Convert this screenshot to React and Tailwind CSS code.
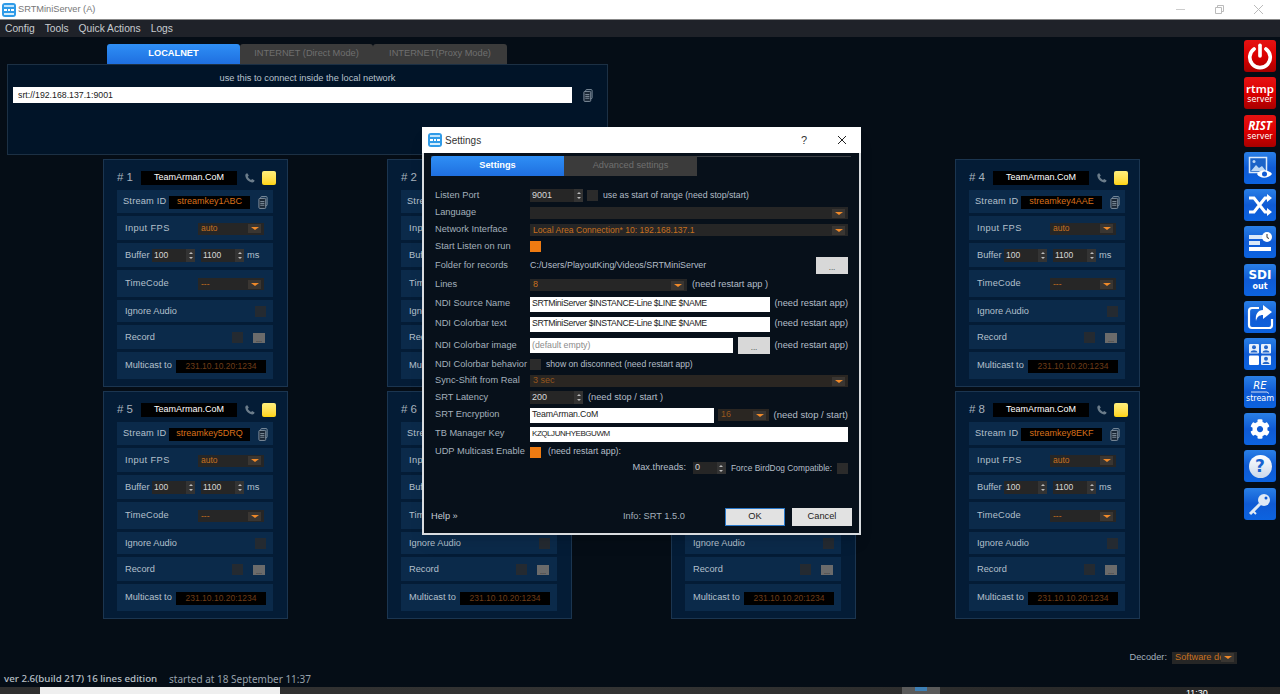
import React from "react";
import { FaCog } from "react-icons/fa";

const cards = [
  { n: 1, key: "streamkey1ABC" },
  { n: 2, key: "streamkey2ABC" },
  { n: 3, key: "streamkey3ABC" },
  { n: 4, key: "streamkey4AAE" },
  { n: 5, key: "streamkey5DRQ" },
  { n: 6, key: "streamkey6ABC" },
  { n: 7, key: "streamkey7ABC" },
  { n: 8, key: "streamkey8EKF" },
];

const AppIcon = () => (
  <svg width="14" height="14" viewBox="0 0 14 14" className="shrink-0">
    <rect width="14" height="14" rx="3" fill="#2f9be8" />
    <rect x="2" y="2" width="10" height="2" fill="#bfe3fb" />
    <rect x="2" y="6" width="3" height="2" fill="#fff" />
    <rect x="6" y="6" width="2" height="2" fill="#fff" />
    <rect x="9" y="6" width="3" height="2" fill="#fff" />
    <rect x="2" y="10" width="10" height="2" fill="#d6eefc" />
  </svg>
);

const CopyIcon = () => (
  <svg width="10" height="13" viewBox="0 0 11 14" fill="none" stroke="#8a98a6" strokeWidth="1" className="shrink-0">
    <rect x="3" y="0.5" width="7" height="10" rx="1" />
    <rect x="1" y="2.5" width="7.5" height="11" rx="1" fill="#1a2735" />
    <path d="M2.5 6h4.5M2.5 8h4.5M2.5 10h4.5" />
  </svg>
);

const Caret = () => (
  <span className="flex h-[9px] w-[13px] shrink-0 items-center justify-center bg-[#3a3632]">
    <span className="h-0 w-0 border-x-[4px] border-t-[3px] border-x-transparent border-t-[#f08a2a]" />
  </span>
);

const Select = ({ value, dim, className = "" }) => (
  <div
    className={`flex items-center justify-between pl-[3px] pr-[3px] ${
      dim ? "bg-[#2a2622] text-[#96561e]" : "bg-[#262626] text-[#c8701e]"
    } ${className}`}
  >
    <span className="overflow-hidden whitespace-nowrap">{value}</span>
    <Caret />
  </div>
);

const Spin = ({ value, className = "" }) => (
  <div className={`flex items-center justify-between bg-[#262626] pl-[2px] text-[#d8d8d8] ${className}`}>
    <span>{value}</span>
    <span className="flex h-full w-[9px] flex-col items-center justify-center gap-[3px] bg-[#333]">
      <span className="h-0 w-0 border-x-2 border-b-2 border-x-transparent border-b-[#bbb]" />
      <span className="h-0 w-0 border-x-2 border-t-2 border-x-transparent border-t-[#bbb]" />
    </span>
  </div>
);

const Box = ({ on, className = "" }) => (
  <span className={`block h-[11px] w-[11px] shrink-0 ${on ? "bg-[#ee7b12]" : "bg-[#2b2b2b]"} ${className}`} />
);

const Row = ({ className = "", children }) => (
  <div className={`flex items-center whitespace-nowrap bg-[#0b2a4a] pt-[1px] text-[9.25px] text-[#b4c0cc] ${className}`}>{children}</div>
);

const Card = ({ n, streamKey }) => (
  <div className="flex h-[228px] w-[185px] flex-col border border-[#1b3550] bg-[#041c36] pl-[13px] pr-[14px] pt-[7px]">
    <div className="-mr-[3px] flex h-[21px] shrink-0 items-center text-[#a7b2bd]">
      <span className="w-[24px] shrink-0 pl-[-1px] text-[11.5px]"># {n}</span>
      <span className="flex h-[14px] w-[96px] shrink-0 items-center justify-center bg-black text-[9px] text-white">TeamArman.CoM</span>
      <svg width="12" height="12" viewBox="0 0 24 24" fill="#6b7c8a" className="ml-[7px] shrink-0">
        <path d="M6.6 2.5l3 4.7-2 2.5c1.2 2.7 3.6 5 6.4 6.3l2.4-2 4.9 3c-.6 2.7-2.8 4.3-5.3 3.9C8.5 19.6 3.3 13.7 2.6 7c-.2-2.2 1.5-4 4-4.500z" />
      </svg>
      <span className="ml-[6px] h-[14px] w-[14px] shrink-0 rounded-[2px] bg-gradient-to-b from-[#ffef7a] to-[#ffd400]" />
    </div>
    <Row className="mt-[2px] h-[23px] pl-[6px]">
      <span className="w-[46px] tracking-[0.2px]">Stream ID</span>
      <span className="flex h-[13px] w-[81px] items-center justify-center bg-black text-[9px] text-[#d9701a]">{streamKey}</span>
      <span className="ml-[8px]"><CopyIcon /></span>
    </Row>
    <Row className="mt-[3px] h-[24px] justify-between pl-[8px] pr-[9px]">
      <span className="tracking-[0.4px]">Input FPS</span>
      <Select value="auto" className="h-[12px] w-[66px] text-[8.5px]" />
    </Row>
    <Row className="mt-[3px] h-[24px] pl-[8px]">
      <span className="w-[27px]">Buffer</span>
      <Spin value="100" className="h-[13px] w-[43px] text-[8.5px]" />
      <Spin value="1100" className="ml-[6px] h-[13px] w-[43px] text-[8.5px]" />
      <span className="ml-[3px]">ms</span>
    </Row>
    <Row className="mt-[3px] h-[27px] justify-between pl-[8px] pr-[9px]">
      <span className="tracking-[0.2px]">TimeCode</span>
      <Select value="---" className="h-[12px] w-[66px] text-[8.5px]" />
    </Row>
    <Row className="mt-[3px] h-[22px] justify-between pl-[8px] pr-[7px]">
      <span>Ignore Audio</span>
      <Box className="opacity-80" />
    </Row>
    <Row className="mt-[3px] h-[24px] pl-[8px] pr-[8px]">
      <span>Record</span>
      <Box className="ml-auto mr-[10px] opacity-80" />
      <span className="flex h-[10px] w-[12px] items-end justify-center bg-[#6b6b6b] text-[7px] leading-[6px] text-[#222]">...</span>
    </Row>
    <Row className="mt-[3px] h-[27px] pl-[8px]">
      <span>Multicast to</span>
      <span className="ml-auto mr-[7px] flex h-[13px] w-[90px] items-center justify-center bg-black text-[8.5px] text-[#6e3d18]">231.10.10.20:1234</span>
    </Row>
  </div>
);

const Tab = ({ active, className = "", children }) => (
  <div
    className={`flex items-center justify-center rounded-t-[3px] text-[9.25px] ${
      active
        ? "bg-gradient-to-b from-[#2f8ff5] to-[#1f6fe0] font-bold text-white"
        : "bg-[#3b3b3b] text-[#6f6f6f]"
    } ${className}`}
  >
    {children}
  </div>
);

const SideBtn = ({ red, children }) => (
  <div
    className={`flex h-[32px] w-[32px] flex-col items-center justify-center rounded-[3px] text-white [font-family:'DejaVu_Sans',sans-serif] ${
      red
        ? "bg-gradient-to-b from-[#e51212] via-[#d00] to-[#a80000]"
        : "bg-gradient-to-b from-[#2a7fe6] via-[#0f5ad4] to-[#0c63e0]"
    }`}
  >
    {children}
  </div>
);

const Sidebar = () => (
  <div className="mr-[4px] -mt-[4px] flex w-[32px] flex-col gap-[5.3px]">
    <SideBtn red>
      <svg width="28" height="28" viewBox="0 0 26 26" fill="none" stroke="#fff" strokeWidth="3.4" strokeLinecap="round">
        <path d="M7.5 6.5a9.5 9.5 0 1 0 11 0" />
        <path d="M13 3v10" />
      </svg>
    </SideBtn>
    <SideBtn red>
      <span className="text-[11.5px] font-semibold leading-[13px] [font-family:'Noto_Sans',sans-serif]">rtmp</span>
      <span className="text-[8px] leading-[10px]">server</span>
    </SideBtn>
    <SideBtn red>
      <span className="text-[11.5px] font-bold italic leading-[13px] [font-family:'Noto_Sans',sans-serif]">RIST</span>
      <span className="text-[8px] leading-[10px]">server</span>
    </SideBtn>
    <SideBtn>
      <svg width="28" height="26" viewBox="0 0 28 26" fill="none">
        <rect x="3.5" y="2.5" width="17" height="15" fill="#1b63c8" stroke="#dbe9fa" strokeWidth="1.5" />
        <path d="M5 16l5-6 3 3 3-2 4 5z" fill="#bcd7f5" />
        <circle cx="8" cy="6.5" r="1.5" fill="#bcd7f5" />
        <path d="M11 19c3-5 11-5 15 0-4 5-12 5-15 0z" fill="#fff" />
        <circle cx="18.5" cy="19" r="2.5" fill="#0f5ad4" />
      </svg>
    </SideBtn>
    <SideBtn>
      <svg width="26" height="24" viewBox="0 0 26 24" fill="none" stroke="#fff" strokeWidth="3">
        <path d="M2 5h5l11 14h3M2 19h5l11-14h3" />
        <path d="M20 1l5 4-5 4zM20 15l5 4-5 4z" fill="#fff" stroke="none" />
      </svg>
    </SideBtn>
    <SideBtn>
      <svg width="28" height="26" viewBox="0 0 28 26">
        <rect x="3" y="6" width="14" height="4" fill="#dce9f8" />
        <rect x="3" y="12" width="11" height="4" fill="#dce9f8" />
        <rect x="3" y="18" width="22" height="4" fill="#fff" />
        <circle cx="21" cy="8" r="5" fill="#fff" />
        <path d="M21 5v3.5l2 1" stroke="#333" strokeWidth="1" fill="none" />
      </svg>
    </SideBtn>
    <SideBtn>
      <span className="text-[12px] font-bold leading-[14px]">SDI</span>
      <span className="text-[8px] font-bold leading-[10px]">out</span>
    </SideBtn>
    <SideBtn>
      <svg width="28" height="26" viewBox="0 0 28 26" fill="none">
        <path d="M13 4H6a3 3 0 0 0-3 3v14a3 3 0 0 0 3 3h17a3 3 0 0 0 3-3v-6" stroke="#fff" strokeWidth="2.2" />
        <path d="M17 1l9 7-9 7v-4c-4 0-6 2-7 6-1-7 2-11 7-11z" fill="#fff" />
      </svg>
    </SideBtn>
    <SideBtn>
      <svg width="28" height="26" viewBox="0 0 28 26">
        <rect x="3" y="3" width="10" height="9.5" rx="1" fill="#e8f1fb" />
        <rect x="15" y="3" width="10" height="9.5" rx="1" fill="#e8f1fb" />
        <rect x="3" y="14.5" width="10" height="9.5" rx="1" fill="#fff" />
        <rect x="15" y="14.5" width="10" height="9.5" rx="1" fill="#e8f1fb" />
        <g fill="#2366c9">
          <circle cx="8" cy="6.3" r="2" />
          <path d="M4.5 11.5c.5-3 6.5-3 7 0z" />
          <circle cx="20" cy="6.3" r="2" />
          <path d="M16.5 11.5c.5-3 6.5-3 7 0z" />
          <circle cx="20" cy="17.8" r="2" />
          <path d="M16.5 23c.5-3 6.5-3 7 0z" />
        </g>
      </svg>
    </SideBtn>
    <SideBtn>
      <span className="text-[10px] italic leading-[11px]">RE</span>
      <svg width="24" height="3" viewBox="0 0 24 3" fill="none" stroke="#fff" strokeWidth="0.8"><path d="M3 1h16l2 1.5" /></svg>
      <span className="text-[8px] leading-[10px]">stream</span>
    </SideBtn>
    <SideBtn>
      <FaCog size={20} color="#fff" />
    </SideBtn>
    <SideBtn>
      <span className="flex h-[23px] w-[23px] items-center justify-center rounded-full bg-gradient-to-b from-white to-[#c9d8ea] text-[17px] font-bold text-[#1763cf]">?</span>
    </SideBtn>
    <SideBtn>
      <svg width="26" height="26" viewBox="0 0 26 26" fill="none">
        <circle cx="17" cy="9" r="6" fill="#dfe9f5" />
        <circle cx="19" cy="7" r="1.5" fill="#0f5ad4" />
        <path d="M13 13L3 23" stroke="#dfe9f5" strokeWidth="3" />
        <path d="M6 20l3 3" stroke="#dfe9f5" strokeWidth="2" />
      </svg>
    </SideBtn>
  </div>
);

const FormRow = ({ label, className = "", children }) => (
  <div className={`flex items-center ${className}`}>
    <span className="w-[95px] shrink-0 whitespace-nowrap text-[#a4b0bc]">{label}</span>
    {children}
  </div>
);

const Note = ({ className = "", children }) => (
  <span className={`whitespace-nowrap text-[#b4bec8] ${className}`}>{children}</span>
);

const Field = ({ className = "", children }) => (
  <div className={`flex items-center whitespace-nowrap bg-white pl-[2px] text-[#222] ${className}`}>{children}</div>
);

const BrowseBtn = ({ className = "" }) => (
  <span className={`flex shrink-0 items-end justify-center bg-[#d8d8d8] pb-[2px] text-[8px] leading-[8px] text-[#333] ${className}`}>...</span>
);

const SettingsDialog = () => (
  <div className="absolute left-[422px] top-[127px] flex h-[408px] w-[439px] flex-col border-[2px] border-t-0 border-[#d9dcdf] bg-[#07101a] shadow-lg">
    <div className="-mx-[2px] flex h-[26px] shrink-0 items-center bg-white pl-[6px] pr-[14px] text-[#333]">
      <AppIcon />
      <span className="ml-[3px] text-[10px]">Settings</span>
      <span className="ml-auto text-[11px]">?</span>
      <svg width="10" height="10" viewBox="0 0 10 10" stroke="#222" strokeWidth="1" className="ml-[30px]">
        <path d="M1 1l8 8M9 1l-8 8" />
      </svg>
    </div>
    <div className="flex h-[23px] shrink-0 items-end pl-[7px] pr-[8px] pt-[3px]">
      <div className="flex h-[20px] w-full border-t border-[#3b3f44]">
        <Tab active className="-mt-px h-[20px] w-[133px] rounded-tr-none">Settings</Tab>
        <Tab className="-mt-px h-[20px] w-[133px] rounded-t-none">Advanced settings</Tab>
      </div>
    </div>
    <div className="flex flex-col pl-[11px] pr-[11px] pt-[12px] text-[9.25px]">
      <FormRow label="Listen Port" className="h-[15px]">
        <Spin value="9001" className="h-[13px] w-[53px] text-[9px]" />
        <Box className="ml-[4px]" />
        <Note className="ml-[5px] text-[8.75px]">use as start of range (need stop/start)</Note>
      </FormRow>
      <FormRow label="Language" className="mt-[3px] h-[14px]">
        <Select value="" className="h-[12px] flex-1" />
      </FormRow>
      <FormRow label="Network Interface" className="mt-[3px] h-[14px]">
        <Select value="Local Area Connection* 10: 192.168.137.1" className="h-[12px] flex-1 text-[8.6px]" />
      </FormRow>
      <FormRow label="Start Listen on run" className="mt-[3px] h-[13px]">
        <Box on />
      </FormRow>
      <FormRow label="Folder for records" className="mt-[2px] h-[21px]">
        <Note className="text-[8.9px]">C:/Users/PlayoutKing/Videos/SRTMiniServer</Note>
        <BrowseBtn className="ml-auto h-[17px] w-[32px]" />
      </FormRow>
      <FormRow label="Lines" className="mt-[2px] h-[14px]">
        <Select value="8" className="h-[12px] w-[157px] text-[9px]" />
        <Note className="ml-[5px]">(need restart app )</Note>
      </FormRow>
      <FormRow label="NDI Source Name" className="mt-[4px] h-[16px]">
        <Field className="h-[15px] w-[240px] text-[8.75px] tracking-[-0.35px]">SRTMiniServer $INSTANCE-Line $LINE $NAME</Field>
        <Note className="ml-auto">(need restart app)</Note>
      </FormRow>
      <FormRow label="NDI Colorbar text" className="mt-[4px] h-[16px]">
        <Field className="h-[15px] w-[240px] text-[8.75px] tracking-[-0.35px]">SRTMiniServer $INSTANCE-Line $LINE $NAME</Field>
        <Note className="ml-auto">(need restart app)</Note>
      </FormRow>
      <FormRow label="NDI Colorbar image" className="mt-[5px] h-[17px]">
        <Field className="h-[15px] w-[203px] text-[8.75px]"><span className="text-[#8b8b8b]">(default empty)</span></Field>
        <BrowseBtn className="ml-[5px] h-[17px] w-[32px]" />
        <Note className="ml-auto">(need restart app)</Note>
      </FormRow>
      <FormRow label="NDI Colorbar behavior" className="mt-[4px] h-[13px]">
        <Box />
        <Note className="ml-[5px] text-[8.65px]">show on disconnect (need restart app)</Note>
      </FormRow>
      <FormRow label="Sync-Shift from Real" className="mt-[3px] h-[14px]">
        <Select dim value="3 sec" className="h-[12px] flex-1 text-[9px]" />
      </FormRow>
      <FormRow label="SRT Latency" className="mt-[2px] h-[15px]">
        <Spin value="200" className="h-[13px] w-[53px] text-[9px]" />
        <Note className="ml-[5px]">(need stop / start )</Note>
      </FormRow>
      <FormRow label="SRT Encryption" className="mt-[2px] h-[16px]">
        <Field className="h-[15px] w-[184px] text-[8.75px] tracking-[-0.15px]">TeamArman.CoM</Field>
        <Select dim value="16" className="ml-[4px] h-[12px] w-[51px] text-[9px]" />
        <Note className="ml-auto text-[9.5px]">(need stop / start)</Note>
      </FormRow>
      <FormRow label="TB Manager Key" className="mt-[3px] h-[16px]">
        <Field className="h-[15px] flex-1 text-[8px] tracking-[-0.45px]">KZQLJUNHYEBGUWM</Field>
      </FormRow>
      <FormRow label="UDP Multicast Enable" className="mt-[3px] h-[14px]">
        <Box on />
        <Note className="ml-[7px] text-[8.9px]">(need restart app):</Note>
      </FormRow>
      <div className="mt-[2px] flex h-[14px] items-center justify-end">
        <Note className="text-[#9aa4ae]">Max.threads:</Note>
        <Spin value="0" className="ml-[7px] h-[12px] w-[33px] text-[9px]" />
        <Note className="ml-[5px] text-[8.4px] text-[#9aa4ae]">Force BirdDog Compatible:</Note>
        <Box className="ml-[5px]" />
      </div>
    </div>
    <div className="mb-[7px] mt-auto flex h-[18px] shrink-0 items-center whitespace-nowrap pl-[7px] text-[9.25px]">
      <span className="w-[192px] text-[#c4ccd4]">Help »</span>
      <span className="w-[102px] text-[#a4b0bc]">Info: SRT 1.5.0</span>
      <span className="flex h-[18px] w-[60px] items-center justify-center border border-[#2a78c8] bg-[#e2e2e2] text-[#222]">OK</span>
      <span className="ml-[7px] flex h-[18px] w-[60px] items-center justify-center bg-[#e2e2e2] text-[#222]">Cancel</span>
    </div>
  </div>
);

export default function App() {
  return (
    <div className="relative flex h-[694px] w-[1280px] flex-col overflow-hidden bg-[#050d16] [font-family:'Liberation_Sans','Noto_Sans',sans-serif]">
      <div className="flex h-[19px] shrink-0 items-center bg-white pl-[2px] pr-[17px] text-[9.25px] text-[#777]">
        <AppIcon />
        <span className="ml-[2px]">SRTMiniServer (A)</span>
        <span className="ml-auto h-px w-[9px] bg-[#ccc]" />
        <svg width="9" height="9" viewBox="0 0 9 9" fill="none" stroke="#bbb" className="ml-[30px]">
          <path d="M2.5 2V.5h6v6H7M.5 2.5h6v6h-6z" />
        </svg>
        <svg width="9" height="9" viewBox="0 0 9 9" stroke="#bbb" strokeWidth="1" className="ml-[30px]">
          <path d="M0 0l9 9M9 0L0 9" />
        </svg>
      </div>
      <div className="flex h-[18px] shrink-0 items-center gap-[10px] border-t border-[#888] bg-[#1f2229] pl-[5px] text-[10.25px] text-[#c8ccd0]">
        <span>Config</span>
        <span>Tools</span>
        <span>Quick Actions</span>
        <span>Logs</span>
      </div>
      <div className="flex min-h-0 flex-1 justify-between pl-[7px] pt-[7px]">
        <div className="flex flex-col">
          <div className="flex h-[20px] pl-[100px]">
            <Tab active className="w-[133px]">LOCALNET</Tab>
            <Tab className="w-[133px]">INTERNET (Direct Mode)</Tab>
            <Tab className="w-[134px]">INTERNET(Proxy Mode)</Tab>
          </div>
          <div className="flex h-[91px] w-[601px] flex-col border border-[#1c3044] bg-[#011428] px-[5px] pt-[6px]">
            <div className="text-center text-[9.25px] leading-[15px] text-[#b8c2cc]">use this to connect inside the local network</div>
            <div className="mt-[1px] flex items-center">
              <div className="flex h-[16px] w-[559px] items-center bg-white pl-[5px] pt-[1px] text-[8.75px] text-[#222]">srt://192.168.137.1:9001</div>
              <span className="ml-[11px]"><CopyIcon /></span>
            </div>
          </div>
          <div className="mt-[4px] grid grid-cols-4 gap-x-[99px] gap-y-[4px] pl-[96px]">
            {cards.map((c) => (
              <Card key={c.n} n={c.n} streamKey={c.key} />
            ))}
          </div>
        </div>
        <Sidebar />
      </div>
      <div className="flex h-[17px] shrink-0 items-center pl-[4px] pt-[2px] text-[9.25px] [font-family:'Noto_Sans',sans-serif]">
        <span className="w-[165px] whitespace-nowrap text-[9.75px] font-medium text-[#b8c0c8]">ver 2.6(build 217) 16 lines edition</span>
        <span className="whitespace-nowrap text-[10px] text-[#98a2ac]">started at 18 September 11:37</span>
        <div className="ml-auto mr-[43px] -mt-[44px] flex items-center [font-family:'Liberation_Sans',sans-serif]">
          <span className="text-[#a4b0bc]">Decoder:</span>
          <Select value="Software de" className="ml-[5px] h-[12px] w-[65px] text-[9.25px]" />
        </div>
      </div>
      <div className="flex h-[7px] shrink-0 overflow-hidden bg-gradient-to-r from-[#2f2f2f] via-[#333] to-[#252525]">
        <span className="ml-[40px] w-[240px] bg-[#efefef]" />
        <span className="ml-[622px] flex w-[38px] justify-center bg-[#5a5a5a]">
          <span className="h-[4px] w-[12px] bg-[#3d7fb5]" />
        </span>
        <span className="ml-[246px] whitespace-nowrap text-[9px] leading-[12px] text-white">11:30</span>
      </div>
      <SettingsDialog />
    </div>
  );
}
